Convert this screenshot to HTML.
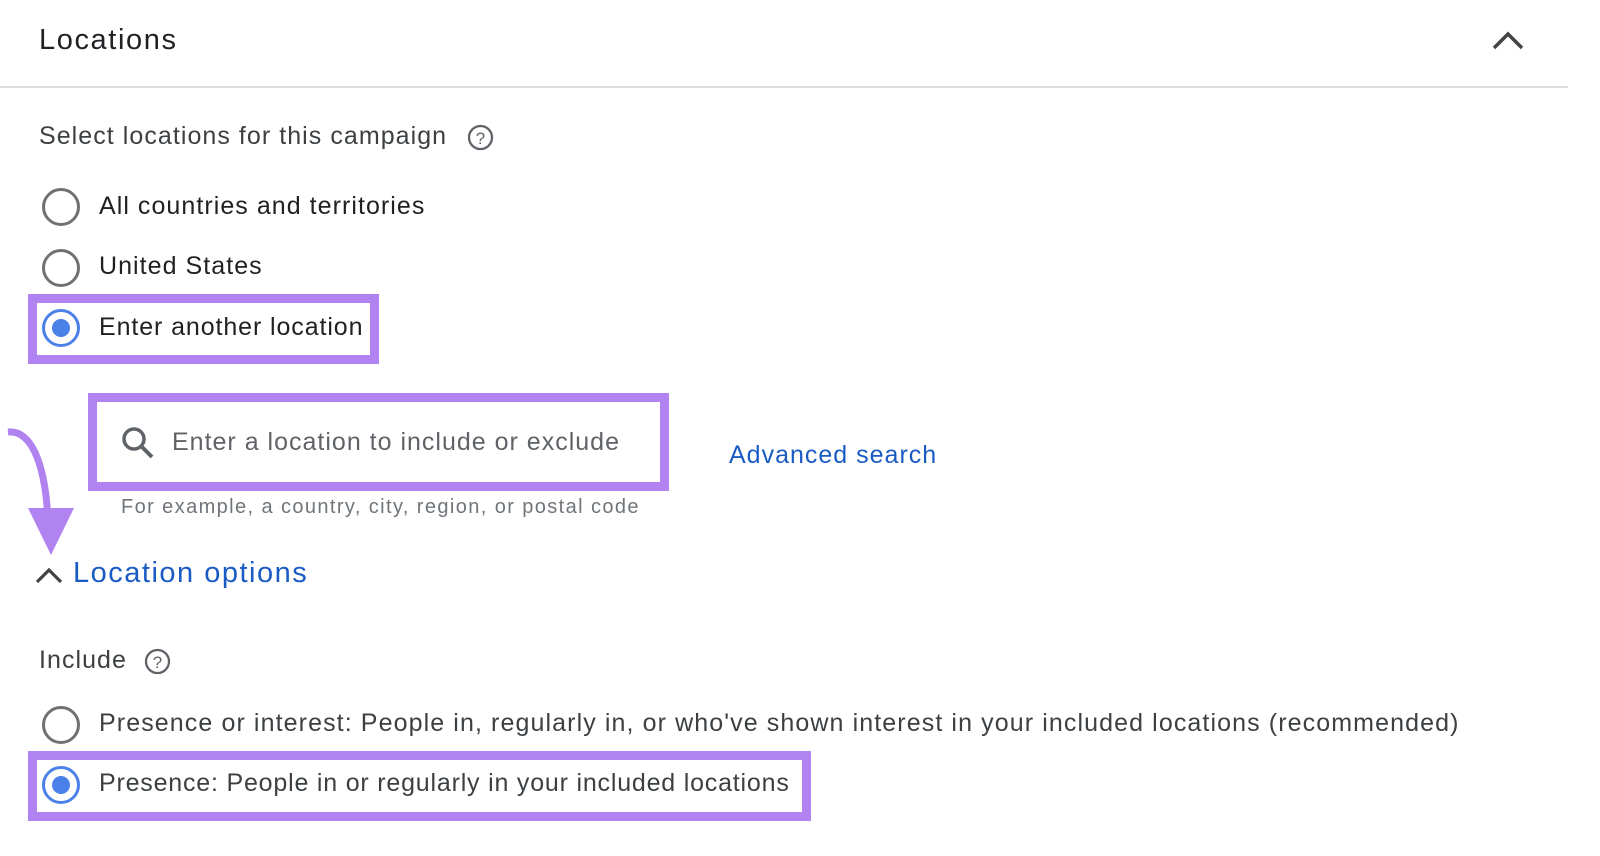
<!DOCTYPE html>
<html><head><style>
body{margin:0;width:1600px;height:856px;background:#fff;font-family:"Liberation Sans",sans-serif;position:relative;overflow:hidden;color:#202124}
.t{position:absolute;white-space:nowrap;letter-spacing:1.05px}
.box{position:absolute;border:9px solid #b083f0;box-sizing:border-box}
.r{position:absolute;width:38px;height:38px;border-radius:50%;border:3px solid #707070;box-sizing:border-box}
.r.on{border-color:#4a80e8}
.r.on::after{content:"";position:absolute;left:7px;top:7px;width:18px;height:18px;border-radius:50%;background:#4a80e8}
</style></head><body>
<div class="t" style="left:39px;top:24px;font-size:29px;color:#202124;letter-spacing:1.6px">Locations</div>
<svg style="position:absolute;left:1490px;top:26px" width="36" height="26"><path d="M4 22 L18 8 L32 22" stroke="#444" stroke-width="3.5" fill="none"/></svg>
<div style="position:absolute;left:0;top:86px;width:1568px;height:2px;background:#dadce0"></div>

<div class="t" style="left:39px;top:122px;font-size:25px;color:#3c4043">Select locations for this campaign</div>
<svg style="position:absolute;left:467px;top:124px" width="27" height="27"><circle cx="13.5" cy="13.5" r="11.5" stroke="#5f6368" stroke-width="2.3" fill="none"/><text x="13.5" y="20" text-anchor="middle" font-size="17" font-family="Liberation Sans" fill="#5f6368">?</text></svg>

<div class="r" style="left:42px;top:188px"></div>
<div class="t" style="left:99px;top:192px;font-size:25px">All countries and territories</div>
<div class="r" style="left:42px;top:249px"></div>
<div class="t" style="left:99px;top:252px;font-size:25px">United States</div>
<div class="box" style="left:28px;top:294px;width:351px;height:70px"></div>
<div class="r on" style="left:42px;top:309px"></div>
<div class="t" style="left:99px;top:313px;font-size:25px;letter-spacing:0.9px">Enter another location</div>

<div class="box" style="left:88px;top:393px;width:581px;height:98px"></div>
<svg style="position:absolute;left:119px;top:424px" width="38" height="38"><circle cx="15" cy="15" r="10" stroke="#5f6368" stroke-width="3.5" fill="none"/><path d="M22 22 L33 33" stroke="#5f6368" stroke-width="4"/></svg>
<div class="t" style="left:172px;top:428px;font-size:25px;color:#5f6368;letter-spacing:1px">Enter a location to include or exclude</div>
<div class="t" style="left:729px;top:441px;font-size:25px;color:#1a5bc4;letter-spacing:1px">Advanced search</div>
<div class="t" style="left:121px;top:496px;font-size:20px;color:#70757a;letter-spacing:1.4px">For example, a country, city, region, or postal code</div>

<svg style="position:absolute;left:0;top:420px" width="80" height="140"><path d="M8 12 C30 10 45 40 48 100" stroke="#b083f0" stroke-width="7" fill="none"/><path d="M28 88 L74 88 L51 135 Z" fill="#b083f0"/></svg>
<svg style="position:absolute;left:34px;top:562px" width="32" height="24"><path d="M3 20 L15 8 L27 20" stroke="#444" stroke-width="3.2" fill="none"/></svg>
<div class="t" style="left:73px;top:557px;font-size:29px;color:#1a5bc4;letter-spacing:1.5px">Location options</div>

<div class="t" style="left:39px;top:646px;font-size:25px;color:#3c4043">Include</div>
<svg style="position:absolute;left:144px;top:648px" width="27" height="27"><circle cx="13.5" cy="13.5" r="11.5" stroke="#5f6368" stroke-width="2.3" fill="none"/><text x="13.5" y="20" text-anchor="middle" font-size="17" font-family="Liberation Sans" fill="#5f6368">?</text></svg>

<div class="r" style="left:42px;top:706px"></div>
<div class="t" style="left:99px;top:709px;font-size:25px;color:#3c4043;letter-spacing:1.1px">Presence or interest: People in, regularly in, or who've shown interest in your included locations (recommended)</div>
<div class="box" style="left:28px;top:751px;width:783px;height:70px"></div>
<div class="r on" style="left:42px;top:766px"></div>
<div class="t" style="left:99px;top:769px;font-size:25px;color:#3c4043;letter-spacing:0.8px">Presence: People in or regularly in your included locations</div>
</body></html>
